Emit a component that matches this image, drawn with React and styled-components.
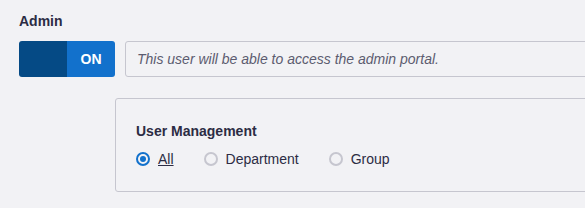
import React, { useState } from 'react';
import styled, { createGlobalStyle } from 'styled-components';

const GlobalStyle = createGlobalStyle`
  html, body {
    margin: 0;
    padding: 0;
    background: #f2f2f5;
    overflow: hidden;
  }
  body {
    font-family: "Liberation Sans", Arial, sans-serif;
    color: #2c2c44;
  }
`;

const Page = styled.div`
  padding: 13px 0 0 19px;
  width: 700px;
`;

const Label = styled.div`
  font-size: 14px;
  font-weight: bold;
  line-height: 16px;
  margin-bottom: 12px;
`;

const Row = styled.div`
  display: flex;
  align-items: center;
  gap: 10px;
`;

const Toggle = styled.button`
  display: flex;
  width: 96px;
  height: 36px;
  padding: 0;
  border: none;
  border-radius: 3px;
  overflow: hidden;
  cursor: pointer;
  font-family: inherit;
`;

const ToggleHalf = styled.span`
  flex: 1;
  display: flex;
  align-items: center;
  justify-content: center;
  background: ${p => (p.$active ? '#1271cc' : '#054a85')};
  color: #fff;
  font-size: 14px;
  font-weight: bold;
`;

const Input = styled.input`
  box-sizing: border-box;
  width: 480px;
  height: 36px;
  padding: 0 11px;
  border: 1px solid #c6c6cf;
  border-radius: 3px;
  background: #f2f2f5;
  font-family: inherit;
  font-size: 14px;
  font-style: italic;
  color: #5c5c70;
  outline: none;

  &::placeholder {
    color: #5c5c70;
    opacity: 1;
  }
`;

const Panel = styled.div`
  box-sizing: border-box;
  margin: 21px 0 0 96px;
  width: 520px;
  height: 94px;
  padding: 24px 20px;
  border: 1px solid #c6c6cf;
  border-radius: 3px;
`;

const PanelTitle = styled.div`
  font-size: 14px;
  font-weight: bold;
  line-height: 16px;
  margin-bottom: 12px;
`;

const Options = styled.div`
  display: flex;
  gap: 30px;
`;

const Option = styled.label`
  display: flex;
  align-items: center;
  gap: 8px;
  font-size: 14px;
  line-height: 16px;
  cursor: pointer;
  text-decoration: ${p => (p.$checked ? 'underline' : 'none')};
`;

const Circle = styled.span`
  box-sizing: border-box;
  width: 14px;
  height: 14px;
  border-radius: 50%;
  border: 2px solid ${p => (p.$checked ? '#1271cc' : '#c6c6cf')};
  display: flex;
  align-items: center;
  justify-content: center;

  &::after {
    content: '';
    width: 6px;
    height: 6px;
    border-radius: 50%;
    background: ${p => (p.$checked ? '#1271cc' : 'transparent')};
  }
`;

const OPTIONS = ['All', 'Department', 'Group'];

export default function App() {
  const [scope, setScope] = useState('All');

  return (
    <>
      <GlobalStyle />
      <Page>
        <Label>Admin</Label>
        <Row>
          <Toggle>
            <ToggleHalf />
            <ToggleHalf $active>ON</ToggleHalf>
          </Toggle>
          <Input readOnly placeholder="This user will be able to access the admin portal." />
        </Row>
        <Panel>
          <PanelTitle>User Management</PanelTitle>
          <Options>
            {OPTIONS.map(opt => (
              <Option key={opt} $checked={scope === opt} onClick={() => setScope(opt)}>
                <Circle $checked={scope === opt} />
                <span>{opt}</span>
              </Option>
            ))}
          </Options>
        </Panel>
      </Page>
    </>
  );
}
